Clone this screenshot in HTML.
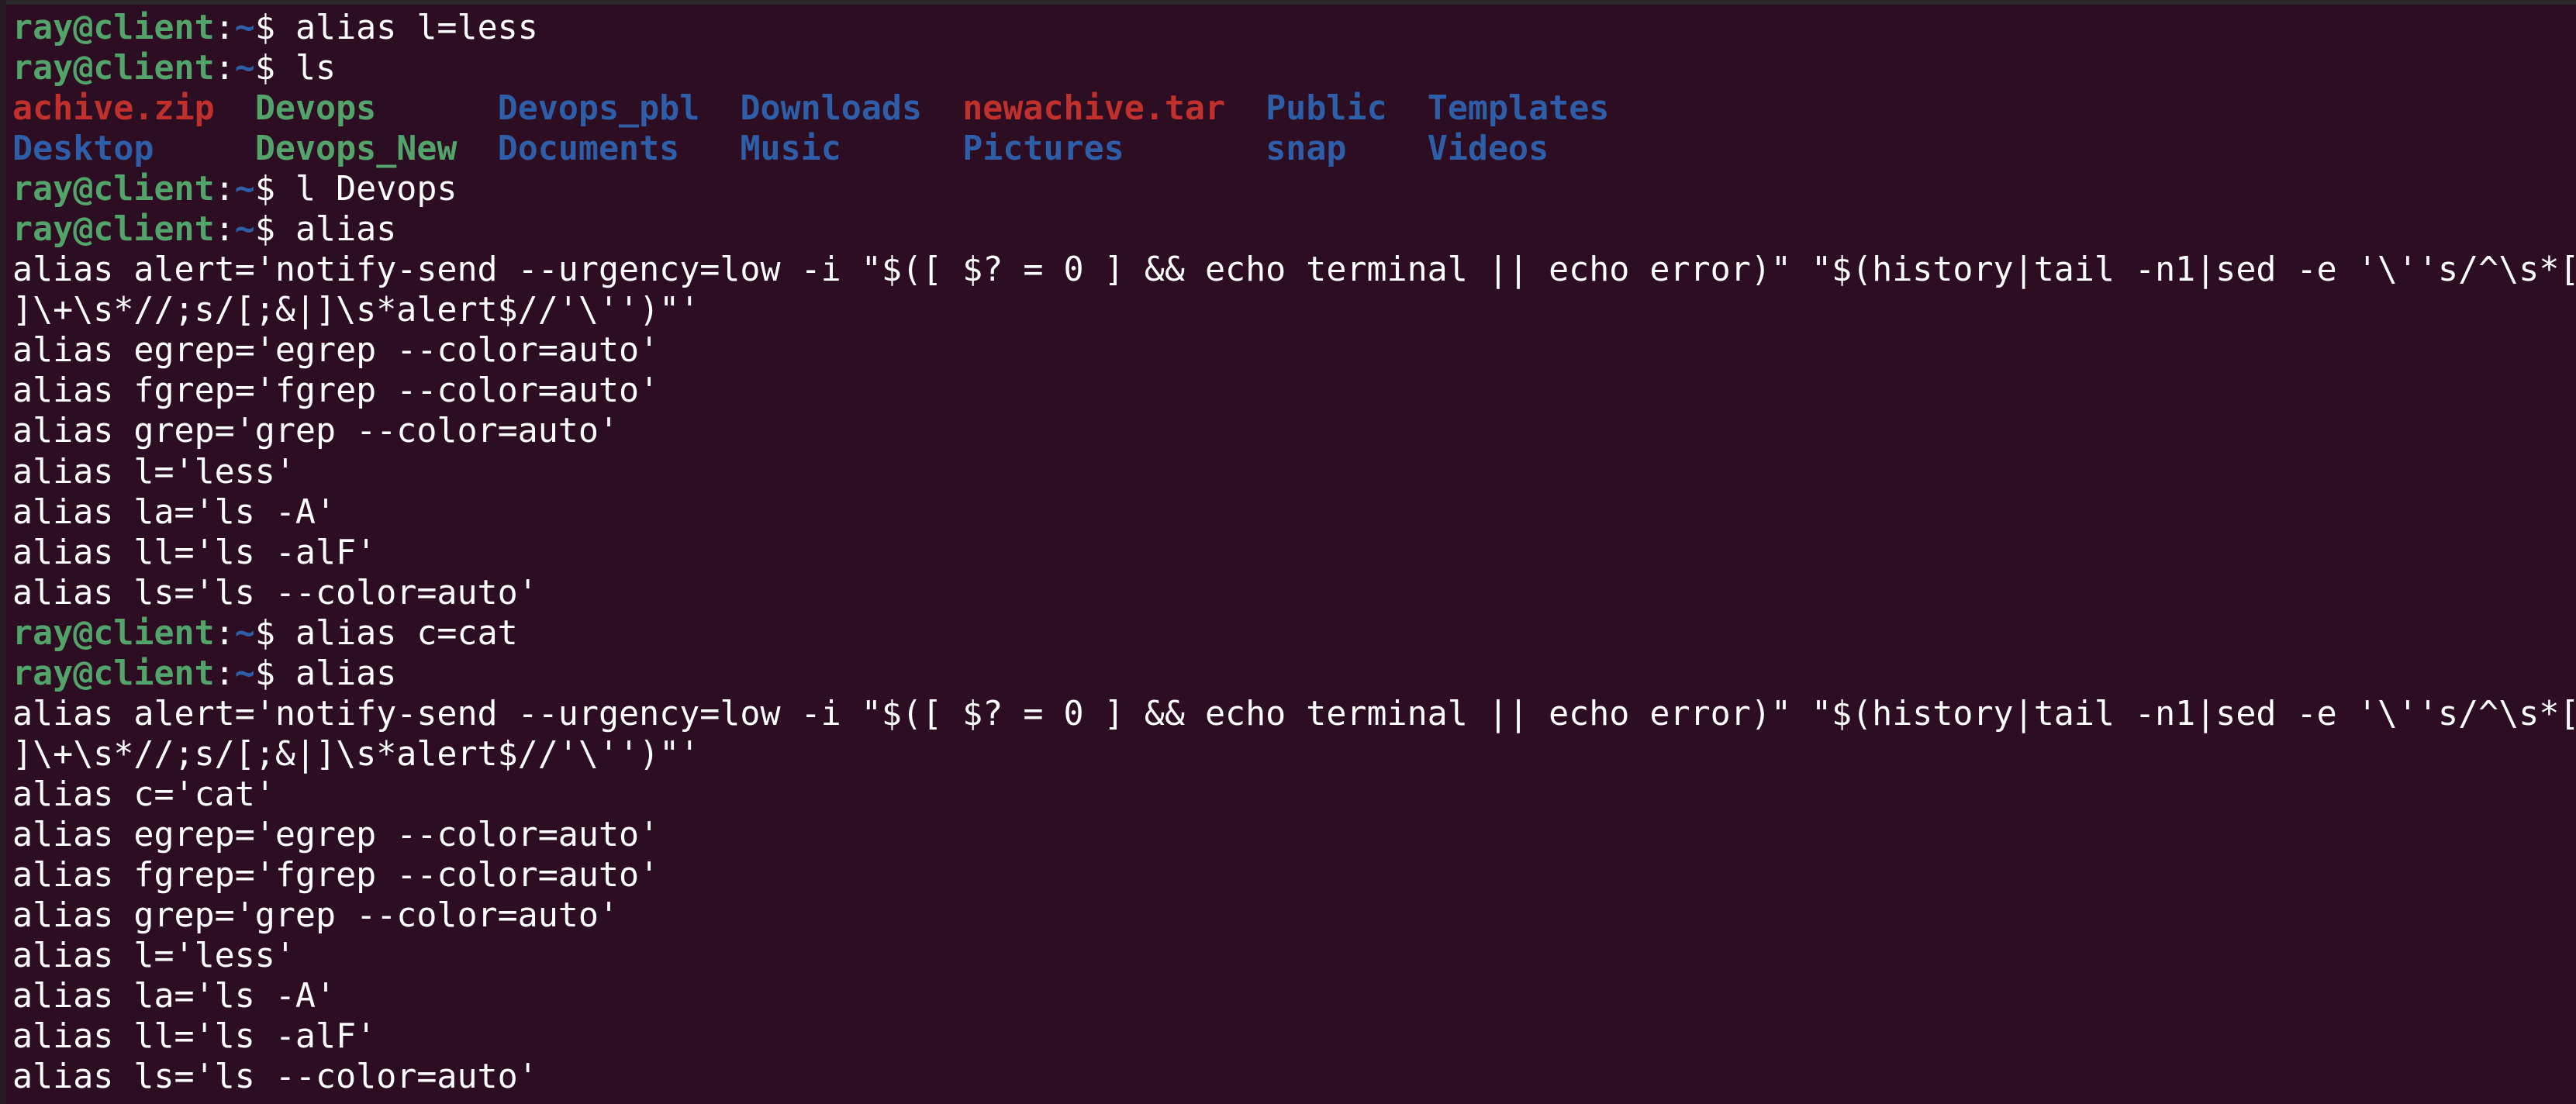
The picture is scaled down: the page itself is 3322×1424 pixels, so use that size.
<!DOCTYPE html>
<html><head><meta charset="utf-8"><style>
html,body{margin:0;padding:0;}
body{width:3322px;height:1424px;overflow:hidden;background:#2c0d22;position:relative;}
.top{position:absolute;left:0;top:0;width:3322px;height:6px;background:#2a2a2a;}
.left{position:absolute;left:0;top:0;width:8px;height:1424px;background:#231c22;}
pre{position:absolute;left:16px;top:10px;margin:0;font-family:"DejaVu Sans Mono","Liberation Mono",monospace;font-size:43.3px;line-height:52.05px;color:#ffffff;white-space:pre;}
.g{color:#53a46a;font-weight:bold}
.b{color:#2f5ea8;font-weight:bold}
.r{color:#c0302d;font-weight:bold}
</style></head><body><div class="top"></div><div class="left"></div>
<pre><span class="g">ray@client</span>:<span class="b">~</span>$ alias l=less
<span class="g">ray@client</span>:<span class="b">~</span>$ ls
<span class="r">achive.zip</span>  <span class="g">Devops</span>      <span class="b">Devops_pbl</span>  <span class="b">Downloads</span>  <span class="r">newachive.tar</span>  <span class="b">Public</span>  <span class="b">Templates</span>
<span class="b">Desktop</span>     <span class="g">Devops_New</span>  <span class="b">Documents</span>   <span class="b">Music</span>      <span class="b">Pictures</span>       <span class="b">snap</span>    <span class="b">Videos</span>
<span class="g">ray@client</span>:<span class="b">~</span>$ l Devops
<span class="g">ray@client</span>:<span class="b">~</span>$ alias
alias alert='notify-send --urgency=low -i "$([ $? = 0 ] &amp;&amp; echo terminal || echo error)" "$(history|tail -n1|sed -e '\''s/^\s*[0-9]
]\+\s*//;s/[;&amp;|]\s*alert$//'\'')"'
alias egrep='egrep --color=auto'
alias fgrep='fgrep --color=auto'
alias grep='grep --color=auto'
alias l='less'
alias la='ls -A'
alias ll='ls -alF'
alias ls='ls --color=auto'
<span class="g">ray@client</span>:<span class="b">~</span>$ alias c=cat
<span class="g">ray@client</span>:<span class="b">~</span>$ alias
alias alert='notify-send --urgency=low -i "$([ $? = 0 ] &amp;&amp; echo terminal || echo error)" "$(history|tail -n1|sed -e '\''s/^\s*[0-9]
]\+\s*//;s/[;&amp;|]\s*alert$//'\'')"'
alias c='cat'
alias egrep='egrep --color=auto'
alias fgrep='fgrep --color=auto'
alias grep='grep --color=auto'
alias l='less'
alias la='ls -A'
alias ll='ls -alF'
alias ls='ls --color=auto'</pre>
</body></html>
